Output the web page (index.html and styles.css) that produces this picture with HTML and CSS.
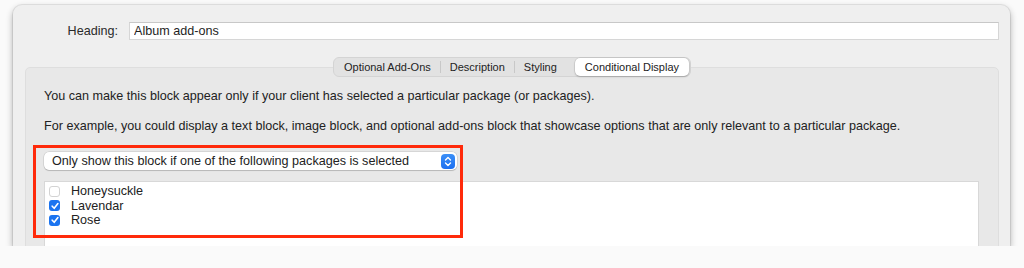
FILE: index.html
```html
<!DOCTYPE html>
<html lang="en">
<head>
    <meta charset="UTF-8">
    <title>Album add-ons</title>
    <link rel="stylesheet" href="styles.css">
</head>
<body>

    <div class="window">
        <div class="heading-row">
            <label class="heading-label" for="heading">Heading:</label>
            <input class="heading-input" id="heading" type="text" value="Album add-ons">
        </div>

        <div class="tabs-wrap">
            <div class="tabs">
                <span class="tab">Optional Add-Ons</span>
                <span class="tab-sep"></span>
                <span class="tab">Description</span>
                <span class="tab-sep"></span>
                <span class="tab">Styling</span>
                <span class="tab tab-active">Conditional Display</span>
            </div>
        </div>

        <div class="panel">
            <p class="note">You can make this block appear only if your client has selected a particular package (or packages).</p>
            <p class="note">For example, you could display a text block, image block, and optional add-ons block that showcase options that are only relevant to a particular package.</p>

            <div class="condition">
                <div class="select">
                    <span class="select-text">Only show this block if one of the following packages is selected</span>
                    <span class="stepper">
                        <svg width="8" height="11" viewBox="0 0 8 11">
                            <path d="M1.5 4 L4 1.5 L6.5 4 M1.5 7 L4 9.5 L6.5 7" fill="none" stroke="#fff" stroke-width="1.4" stroke-linecap="round" stroke-linejoin="round"/>
                        </svg>
                    </span>
                </div>

                <div class="pkg-list">
                    <div class="pkg">
                        <span class="check"></span>
                        <span>Honeysuckle</span>
                    </div>
                    <div class="pkg">
                        <span class="check check-on">
                            <svg width="10" height="10" viewBox="0 0 10 10"><path d="M2.2 5.2 L4.2 7.3 L7.9 2.6" fill="none" stroke="#fff" stroke-width="1.6" stroke-linecap="round" stroke-linejoin="round"/></svg>
                        </span>
                        <span>Lavendar</span>
                    </div>
                    <div class="pkg">
                        <span class="check check-on">
                            <svg width="10" height="10" viewBox="0 0 10 10"><path d="M2.2 5.2 L4.2 7.3 L7.9 2.6" fill="none" stroke="#fff" stroke-width="1.6" stroke-linecap="round" stroke-linejoin="round"/></svg>
                        </span>
                        <span>Rose</span>
                    </div>
                </div>

                <!-- annotation box drawn over the controls -->
                <div class="highlight"></div>
            </div>
        </div>
    </div>

</body>
</html>
```

FILE: styles.css
```css
body {
    margin: 0;
    padding: 0;
    background-color: #fafafa;
    font-family: 'Liberation Sans', Arial, sans-serif;
    font-size: 12.6px;
    color: #222;
}

.window {
    margin: 5px 14px 0 13px;
    height: 241px;
    overflow: hidden;
    box-sizing: border-box;
    padding: 17px 11px 0 12px;
    background-color: #efefef;
    border-radius: 9px 9px 0 0;
    box-shadow: 0 3px 7px rgba(0, 0, 0, 0.32), 0 0 0 1px rgba(0, 0, 0, 0.07);
}

.heading-row {
    display: flex;
    align-items: center;
    height: 18px;
}

.heading-label {
    width: 104px;
    text-align: right;
    padding-right: 11px;
    box-sizing: border-box;
    color: #2a2a2a;
}

.heading-input {
    flex: 1;
    height: 18px;
    box-sizing: border-box;
    margin: 0;
    padding: 0 4px;
    border: 1px solid #d6d6d6;
    border-top-color: #c8c8c8;
    background: #fff;
    font-family: inherit;
    font-size: 12.6px;
    color: #1e1e1e;
    outline: none;
}

.tabs-wrap {
    display: flex;
    justify-content: center;
    margin-top: 17px;
    margin-bottom: -10px;
    position: relative;
    z-index: 1;
}

.tabs {
    display: flex;
    align-items: center;
    height: 20px;
    box-sizing: border-box;
    padding: 1px;
    background-color: #e2e2e2;
    border: 1px solid #d4d4d4;
    border-radius: 6px;
    font-size: 11px;
    color: #222;
}

.tab {
    padding: 0 9px;
    line-height: 16px;
}

.tab-sep {
    width: 1px;
    height: 12px;
    background-color: #c8c8c8;
}

.tab-active {
    margin-left: 9px;
    padding: 0 10px;
    height: 18px;
    line-height: 18px;
    background-color: #fff;
    border-radius: 5px;
    box-shadow: 0 0 0 0.5px rgba(0, 0, 0, 0.12), 0 1px 2px rgba(0, 0, 0, 0.18);
}

.panel {
    height: 200px;
    box-sizing: border-box;
    padding: 20px 19px 0 18px;
    background-color: #e8e8e8;
    border: 1px solid #dedede;
    border-radius: 5px;
}

.note {
    margin: 0 0 14px 0;
    line-height: 16px;
    white-space: nowrap;
}

.condition {
    position: relative;
    padding-top: 4px;
}

.select {
    display: flex;
    align-items: center;
    justify-content: space-between;
    width: 413px;
    height: 18px;
    box-sizing: border-box;
    padding: 0 2px 0 8px;
    background-color: #fff;
    border-radius: 5px;
    box-shadow: 0 0 0 0.5px rgba(0, 0, 0, 0.15), 0 1px 1px rgba(0, 0, 0, 0.15);
}

.stepper {
    display: flex;
    align-items: center;
    justify-content: center;
    width: 14px;
    height: 15px;
    background: linear-gradient(#3b8ff7, #1c6ff0);
    border-radius: 4px;
}

.pkg-list {
    margin-top: 11px;
    height: 80px;
    padding-top: 2px;
    box-sizing: border-box;
    background-color: #fff;
    border: 1px solid #d8d8d8;
    border-bottom: none;
}

.pkg {
    display: flex;
    align-items: center;
    height: 14.6px;
    padding-left: 4px;
}

.check {
    display: flex;
    align-items: center;
    justify-content: center;
    width: 11px;
    height: 11px;
    margin-right: 11px;
    box-sizing: border-box;
    border: 1px solid #d3d3d3;
    border-radius: 3px;
    background-color: #fff;
}

.check-on {
    border: none;
    background-color: #1b74f0;
}

.highlight {
    position: absolute;
    left: -11px;
    top: -3px;
    width: 430px;
    height: 93px;
    box-sizing: border-box;
    border: 3px solid #ff2a0a;
}
```
